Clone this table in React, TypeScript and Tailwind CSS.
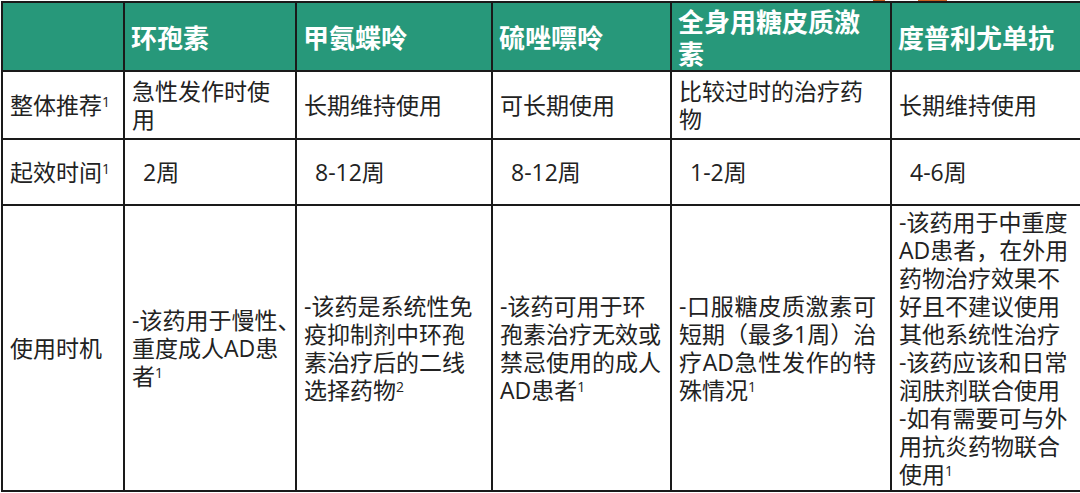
import { ReactNode } from "react";

const Sup = ({ n }: { n: number }) => (
  <sup className="text-[14px]">{n}</sup>
);

const headers: string[][] = [
  ["环孢素"],
  ["甲氨蝶呤"],
  ["硫唑嘌呤"],
  ["全身用糖皮质激", "素"],
  ["度普利尤单抗"],
];

type Row = {
  label: ReactNode;
  indent?: boolean;
  cells: ReactNode[][];
};

const rows: Row[] = [
  {
    label: (
      <>
        整体推荐
        <Sup n={1} />
      </>
    ),
    cells: [
      ["急性发作时使", "用"],
      ["长期维持使用"],
      ["可长期使用"],
      ["比较过时的治疗药", "物"],
      ["长期维持使用"],
    ],
  },
  {
    label: (
      <>
        起效时间
        <Sup n={1} />
      </>
    ),
    indent: true,
    cells: [["2周"], ["8-12周"], ["8-12周"], ["1-2周"], ["4-6周"]],
  },
  {
    label: "使用时机",
    cells: [
      [
        "-该药用于慢性、",
        "重度成人AD患",
        <>
          者<Sup n={1} />
        </>,
      ],
      [
        "-该药是系统性免",
        "疫抑制剂中环孢",
        "素治疗后的二线",
        <>
          选择药物
          <Sup n={2} />
        </>,
      ],
      [
        "-该药可用于环",
        "孢素治疗无效或",
        "禁忌使用的成人",
        <>
          AD患者
          <Sup n={1} />
        </>,
      ],
      [
        "-口服糖皮质激素可",
        "短期（最多1周）治",
        "疗AD急性发作的特",
        <>
          殊情况
          <Sup n={1} />
        </>,
      ],
      [
        "-该药用于中重度",
        "AD患者，在外用",
        "药物治疗效果不",
        "好且不建议使用",
        "其他系统性治疗",
        "-该药应该和日常",
        "润肤剂联合使用",
        "-如有需要可与外",
        "用抗炎药物联合",
        <>
          使用
          <Sup n={1} />
        </>,
      ],
    ],
  },
];

function Lines({ lines, justify }: { lines: ReactNode[]; justify?: boolean }) {
  return (
    <div className={justify ? "w-[197px]" : ""}>
      {lines.map((line, i) => (
        <div
          key={i}
          className={
            justify && i < lines.length - 1
              ? "whitespace-nowrap [text-align-last:justify]"
              : "whitespace-nowrap"
          }
        >
          {line}
        </div>
      ))}
    </div>
  );
}

export default function App() {
  return (
    <div className="relative h-[493px] w-[1080px] overflow-hidden bg-white font-['Open_Sans','Noto_Sans_CJK_SC',sans-serif]">
      {/* cropped bits of something orange above the table */}
      <span className="absolute left-[873px] top-0 h-[1px] w-[12px] bg-[#c8601f]" />
      <span className="absolute left-[918px] top-0 h-[1px] w-[29px] bg-[#c8601f]" />

      <div className="ml-[1px] mt-[1px] grid w-max grid-cols-[120px_170px_194px_177px_218px_200px] grid-rows-[67px_66px_64px_284px] gap-[2px] bg-[#1a1a1a] p-[2px]">
        <div className="bg-[#27987a]" />
        {headers.map((h, i) => (
          <div
            key={i}
            className="flex flex-col justify-center bg-[#27987a] pl-[6px] font-['Noto_Sans_CJK_SC',sans-serif] text-[26px] font-bold leading-[32px] text-white"
          >
            {h.map((line, j) => (
              <div key={j} className="whitespace-nowrap">
                {line}
              </div>
            ))}
          </div>
        ))}

        {rows.map((row, r) => (
          <div key={r} className="contents">
            <div className="flex items-center whitespace-nowrap bg-white pl-[7px] text-[23px] leading-[28px] text-[#222]">
              <div>{row.label}</div>
            </div>
            {row.cells.map((cell, c) => (
              <div
                key={c}
                className={`flex items-center bg-white text-[23px] leading-[28px] text-[#222] ${
                  row.indent ? "pl-[18px]" : "pl-[7px]"
                }`}
              >
                <Lines lines={cell} justify={r === 2 && c === 3} />
              </div>
            ))}
          </div>
        ))}
      </div>
    </div>
  );
}
